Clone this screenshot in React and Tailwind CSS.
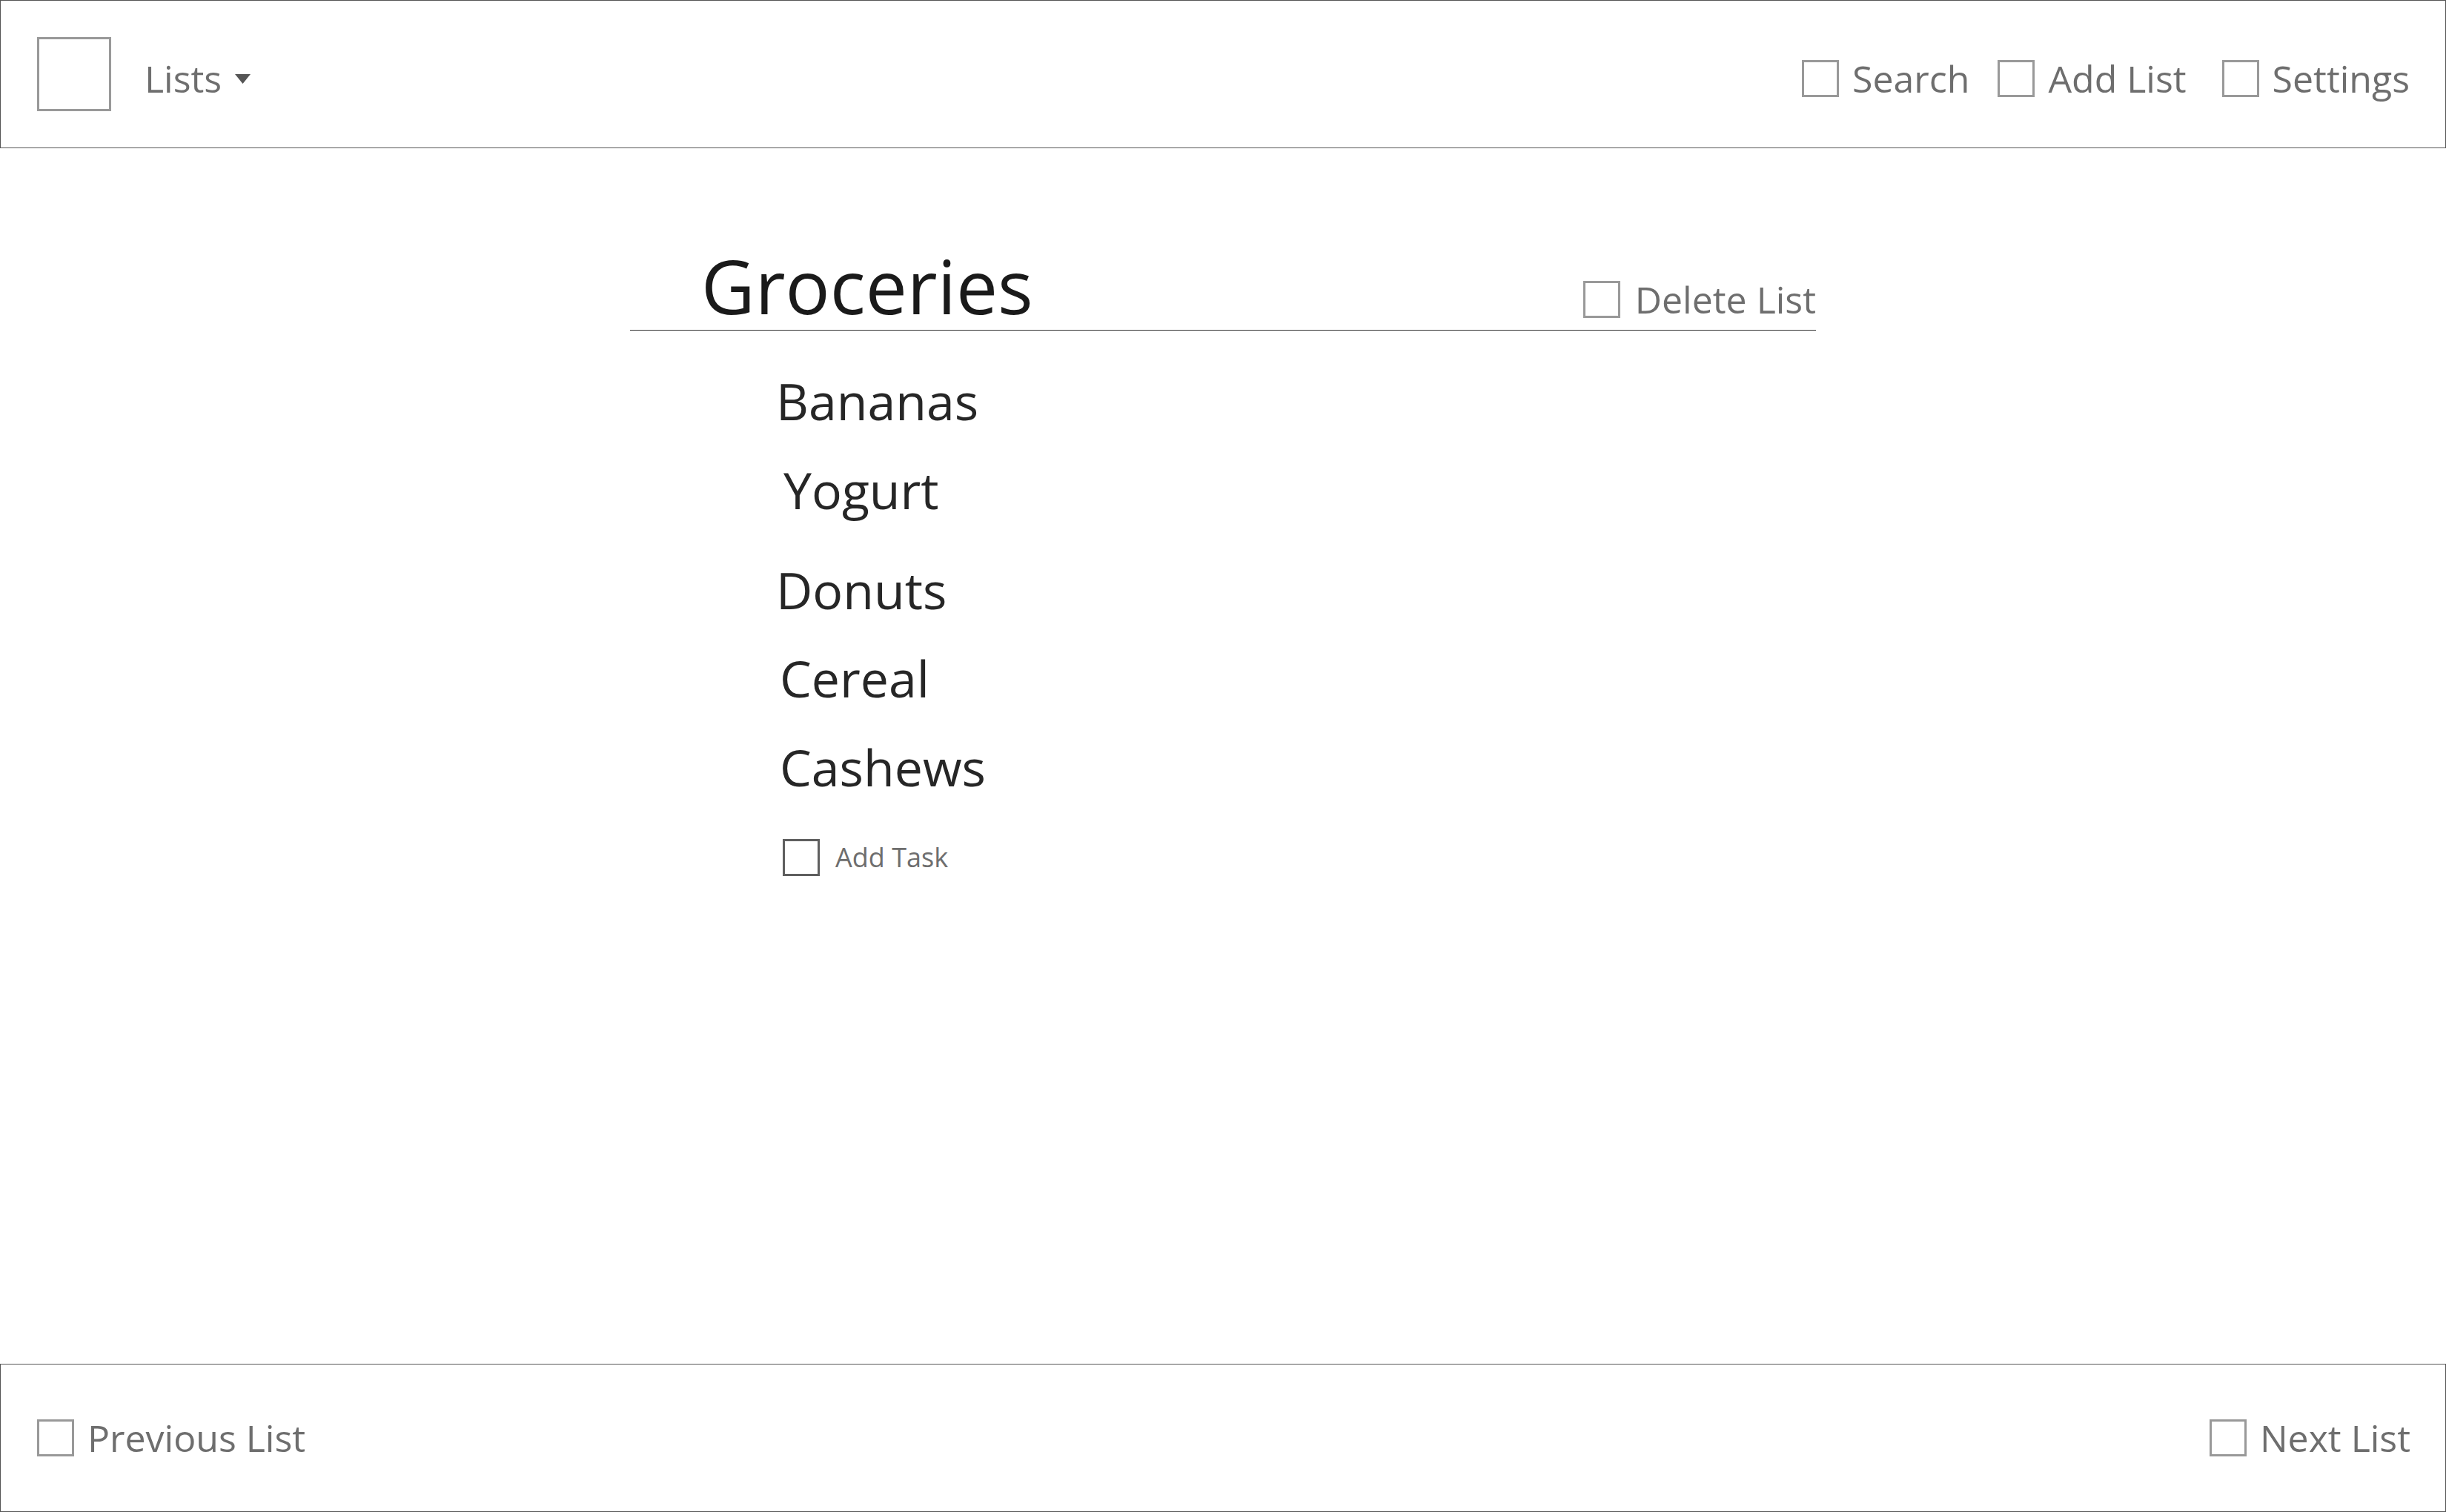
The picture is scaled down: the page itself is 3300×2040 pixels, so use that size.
import React from "react";

// Wireframe of a list view: header, task list, footer nav
const items = [
  { name: "Bananas", cls: "mt-[61px] ml-[197px]" },
  { name: "Yogurt", cls: "mt-[52px] ml-[207px]" },
  { name: "Donuts", cls: "mt-[67px] ml-[197px]" },
  { name: "Cereal", cls: "mt-[51px] ml-[202px]" },
  { name: "Cashews", cls: "mt-[52px] ml-[202px]" },
];

const Box = ({ className = "" }) => (
  <div className={`w-[50px] h-[50px] shrink-0 border-[3px] border-[#999999] ${className}`} />
);

const Action = ({ label, className = "" }) => (
  <div className={`flex items-center ${className}`}>
    <Box />
    <span className="ml-[18px] text-[50px] leading-none text-[#6e6e6e]">{label}</span>
  </div>
);

const App = () => {
  return (
    <div className="w-[3300px] h-[2040px] flex flex-col bg-white font-['Open_Sans',sans-serif]">
      <header className="h-[200px] shrink-0 border border-[#555555] flex items-center pt-[12px] pl-[49px] pr-[48px]">
        <div className="w-[100px] h-[100px] mb-[12px] border-[3px] border-[#999999]" />
        <span className="ml-[45px] text-[50px] leading-none text-[#6e6e6e]">Lists</span>
        <svg className="ml-[18px]" width="21" height="13" viewBox="0 0 21 13">
          <polygon points="0,0 21,0 10.5,13" fill="#555555" />
        </svg>
        <div className="ml-auto flex items-center">
          <Action label="Search" />
          <Action label="Add List" className="ml-[38px]" />
          <Action label="Settings" className="ml-[48px]" />
        </div>
      </header>

      <main className="flex-1">
        <div className="mx-auto w-[1600px] pt-[135px]">
          <div className="flex items-end justify-between border-b border-[#333333]">
            <h1 className="ml-[96px] mb-[10px] text-[100px] leading-none font-normal text-[#1a1a1a]">Groceries</h1>
            <div className="flex items-center mb-[16px]">
              <Box />
              <span className="ml-[20px] text-[50px] leading-none text-[#6e6e6e]">Delete List</span>
            </div>
          </div>

          <div className="flex flex-col items-start">
            {items.map((item) => (
              <p key={item.name} className={`text-[68px] leading-none text-[#262626] ${item.cls}`}>
                {item.name}
              </p>
            ))}
            <div className="flex items-center mt-[63px] ml-[206px]">
              <div className="w-[50px] h-[50px] border-[3px] border-[#5f5f5f]" />
              <span className="ml-[21px] text-[36px] leading-none text-[#6e6e6e]">Add Task</span>
            </div>
          </div>
        </div>
      </main>

      <footer className="h-[200px] shrink-0 border border-[#555555] flex items-center justify-between pl-[49px] pr-[49px]">
        <Action label="Previous List" />
        <Action label="Next List" className="mr-[-2px]" />
      </footer>
    </div>
  );
};

export default App;
